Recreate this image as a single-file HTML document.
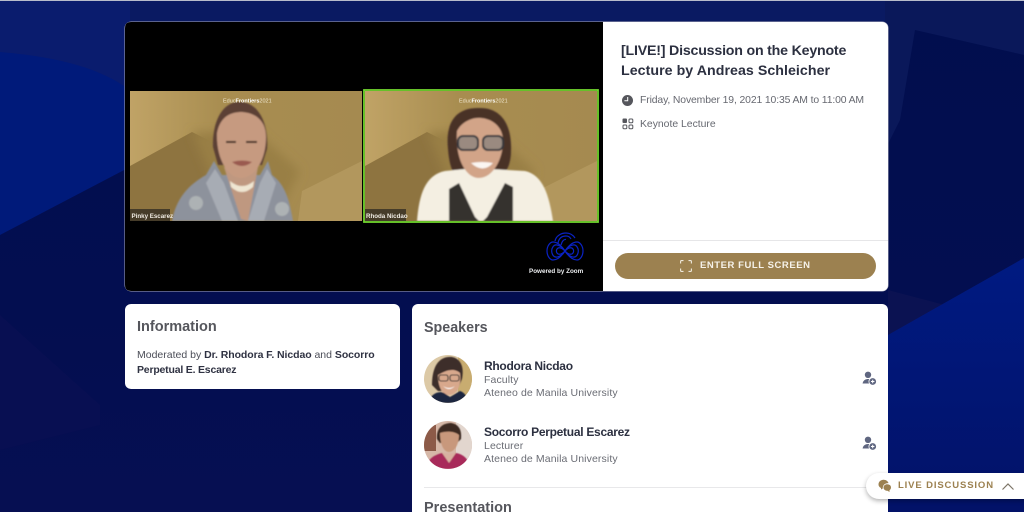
<!DOCTYPE html>
<html><head><meta charset="utf-8"><style>
html,body{margin:0;padding:0;width:1024px;height:512px;overflow:hidden}
body{position:relative;background:#020c4c;font-family:"Liberation Sans",sans-serif}
#w{position:absolute;left:0;top:0;width:1024px;height:512px;overflow:hidden}
.a{position:absolute;white-space:nowrap}
.card{position:absolute;background:#fff;border-radius:6px}
.b{font-weight:bold}
</style></head><body><div id="w">
<svg class="a" style="left:0;top:0" width="1024" height="512" viewBox="0 0 1024 512">
<defs>
<linearGradient id="br" x1="0" y1="0" x2="0" y2="1"><stop offset="0" stop-color="#001a82"/><stop offset="1" stop-color="#021268"/></linearGradient>
<linearGradient id="dk" x1="0" y1="0" x2="0" y2="1"><stop offset="0" stop-color="#010e4e"/><stop offset=".6" stop-color="#030e50"/><stop offset="1" stop-color="#060f52"/></linearGradient>
</defs>
<rect width="1024" height="512" fill="url(#dk)"/>
<rect y="0" width="1024" height="22" fill="#0a1a62"/>
<path d="M0 0H130V167L0 235Z" fill="#001a7a"/>
<path d="M0 0H130V90C105 72 70 58 0 52Z" fill="#0a1c6e"/>
<path d="M0 315L100 405V425L0 450Z" fill="#080f52"/>
<path d="M885 0H1024V55L915 30L900 120L885 150Z" fill="#0a185a"/>
<path d="M888 290L945 305L888 335Z" fill="#0b1252"/>
<path d="M888 335L1024 258V512H888Z" fill="url(#br)"/>
<rect width="1024" height="1" fill="#b8bccb"/>
</svg>

<div class="card" style="left:125px;top:22px;width:763px;height:269px;box-shadow:0 0 0 .5px #aab"></div>
<svg class="a" style="left:125px;top:22px" width="478" height="269" viewBox="125 22 478 269">
<defs>
<filter id="s1" x="-10%" y="-10%" width="120%" height="120%"><feGaussianBlur stdDeviation=".8"/></filter>
<filter id="s2"><feGaussianBlur stdDeviation="5"/></filter>
<clipPath id="c"><path d="M131 22H603V291H131Q125 291 125 285V28Q125 22 131 22Z"/></clipPath>
<clipPath id="v1"><rect x="130" y="91" width="232" height="130"/></clipPath>
<clipPath id="v2"><rect x="365" y="91" width="232" height="130"/></clipPath>
<linearGradient id="gv" x1="0" y1="0" x2="1" y2="0"><stop offset="0" stop-color="#c0a366"/><stop offset=".4" stop-color="#a88d50"/><stop offset="1" stop-color="#a58a50"/></linearGradient>
<g id="bgv">
<rect width="232" height="130" fill="url(#gv)"/>
<path d="M0 75L62 41L100 60L110 130H0Z" fill="#8e7440"/>
<path d="M62 41L125 40L170 80L145 130H100Z" fill="#997f45" filter="url(#s2)"/>
<path d="M232 70V130H168L172 100Z" fill="#b2975d"/>
</g>
</defs>
<g clip-path="url(#c)">
<rect x="125" y="22" width="478" height="269" fill="#000"/>
<g clip-path="url(#v1)">
<g transform="translate(130 91)"><use href="#bgv"/>
<g filter="url(#s1)">
<path d="M83 56C82 32 92 10 110 11C128 11 139 32 137 58L132 74H88Z" fill="#5c4034"/>
<path d="M42 130C46 108 58 94 76 84L84 70L92 84H130L138 70L142 84C156 94 160 112 163 130Z" fill="#8d929c"/>
<path d="M94 76L111 128L118 130L128 76Z" fill="#bf9880"/>
<path d="M85 78L94 92L108 130H92L76 92Z" fill="#a7acb4"/><path d="M137 78L130 92L118 130H134L146 92Z" fill="#a7acb4"/>
<path d="M87 42C90 26 100 21 112 21C126 22 136 30 136 46C136 70 124 87 111 87C98 87 86 68 87 42Z" fill="#c69a80"/>
<path d="M100 90Q112 100 124 90L123 96Q112 106 101 96Z" fill="#efe6d2"/>
<path d="M96 51L106 51M116 51L127 51" stroke="#3c2a22" stroke-width="2"/>
<path d="M102 71Q112 68 122 71Q112 79 102 71Z" fill="#9a5a50"/>
<circle cx="66" cy="112" r="7" fill="#c8ccc8" opacity=".55"/><circle cx="152" cy="118" r="7" fill="#c8ccc8" opacity=".55"/>
</g>
<rect x="0" y="118" width="40" height="12" fill="#3a3226" opacity=".85"/>
</g></g>
<g clip-path="url(#v2)">
<g transform="translate(365 91)"><use href="#bgv"/>
<g filter="url(#s1)">
<path d="M83 58C80 30 92 16 115 17C138 17 147 36 146 60C146 72 142 82 135 86H92C87 82 84 72 83 58Z" fill="#4a3026"/>
<path d="M52 130C54 104 60 84 80 80L100 78H126L160 80C178 84 184 104 188 130Z" fill="#f4efe2"/>
<path d="M84 98L94 92L110 126L114 130H84Z" fill="#35312f"/>
<path d="M148 96L140 92L122 126L118 130H148Z" fill="#35312f"/>
<path d="M92 40C96 32 106 26 116 27C128 28 138 36 138 50C138 68 128 87 114 87C100 87 90 66 92 40Z" fill="#d2a488"/>
<rect x="93" y="45" width="20" height="14" rx="5" fill="#9a8a80" stroke="#35383c" stroke-width="2"/>
<rect x="118" y="45" width="20" height="14" rx="5" fill="#9a8a80" stroke="#35383c" stroke-width="2"/>
<path d="M106 72Q117 70 128 72Q118 83 106 72Z" fill="#fbf6f2"/>
</g>
<rect x="0" y="118" width="41" height="12" fill="#3a3226" opacity=".85"/>
</g></g>
<rect x="364" y="90" width="234" height="132" fill="none" stroke="#72d62e" stroke-width="1.8"/>
<g fill="none" stroke="#0a22c4" stroke-width="1.2">
<g transform="translate(565 251)">
<path vector-effect="non-scaling-stroke" d="M0 0C-4-6-8-9-12-9C-15-9-18-5-18 0C-18 5-15 9-12 9C-8 9-4 6 0 0C4-6 8-9 12-9C15-9 18-5 18 0C18 5 15 9 12 9C8 9 4 6 0 0Z"/>
<path vector-effect="non-scaling-stroke" transform="scale(.74 .68)" d="M0 0C-4-6-8-9-12-9C-15-9-18-5-18 0C-18 5-15 9-12 9C-8 9-4 6 0 0C4-6 8-9 12-9C15-9 18-5 18 0C18 5 15 9 12 9C8 9 4 6 0 0Z"/>
<path vector-effect="non-scaling-stroke" transform="scale(.48 .36)" d="M0 0C-4-6-8-9-12-9C-15-9-18-5-18 0C-18 5-15 9-12 9C-8 9-4 6 0 0C4-6 8-9 12-9C15-9 18-5 18 0C18 5 15 9 12 9C8 9 4 6 0 0Z"/>
</g>
<path d="M555 241C556 236 561 233 566 233C570 233 573 235 575 238"/>
<path d="M558 243C559 238 562 236 566 236C568 236 570 237 571 239"/>
<path d="M561 245C562 241 564 239 566 239.5"/>
</g>
</g>
<text x="223" y="102.5" fill="#efe6cd" font-size="5.5" font-family="Liberation Sans">Educ<tspan font-weight="bold" fill="#fff">Frontiers</tspan>2021</text>
<text x="459" y="102.5" fill="#efe6cd" font-size="5.5" font-family="Liberation Sans">Educ<tspan font-weight="bold" fill="#fff">Frontiers</tspan>2021</text>
<text x="131.5" y="218" fill="#f0ece4" font-size="6.2" font-weight="bold" font-family="Liberation Sans">Pinky Escarez</text>
<text x="366" y="218" fill="#f0ece4" font-size="6.2" font-weight="bold" font-family="Liberation Sans">Rhoda Nicdao</text>
<text x="529" y="273" fill="#eceef0" font-size="6.3" font-weight="bold" font-family="Liberation Sans">Powered by Zoom</text>
</svg>

<div class="a b" style="left:621px;top:41px;font-size:14.2px;line-height:20px;color:#2c3040"><span style="letter-spacing:-.2px">[LIVE!] Discussion on the Keynote</span><br><span style="letter-spacing:.05px">Lecture by Andreas Schleicher</span></div>
<svg class="a" style="left:621px;top:94px" width="14" height="14" viewBox="0 0 14 14"><circle cx="6.5" cy="6.5" r="5.5" fill="#55565c"/><path d="M6.7 3V6.8H3.4" stroke="#fff" stroke-width="1" fill="none"/></svg>
<div class="a" style="left:640px;top:94px;font-size:10.4px;line-height:14px;color:#666870;letter-spacing:-.12px">Friday, November 19, 2021 10:35 AM to 11:00 AM</div>
<svg class="a" style="left:622px;top:118px" width="12" height="12" viewBox="0 0 12 12"><rect x=".5" y=".5" width="4.5" height="4.5" rx="1" fill="#55565c"/><g fill="none" stroke="#55565c"><rect x="7" y="1" width="3.8" height="3.8" rx="1"/><rect x="1" y="7" width="3.8" height="3.8" rx="1"/><rect x="7" y="7" width="3.8" height="3.8" rx="1"/></g></svg>
<div class="a" style="left:640px;top:118px;font-size:10.4px;line-height:14px;color:#666870">Keynote Lecture</div>
<div class="a" style="left:603px;top:240px;width:285px;height:1px;background:#e6e6e8"></div>
<div class="a" style="left:615px;top:253px;width:261px;height:26px;border-radius:13px;background:#9c8150"></div>
<svg class="a" style="left:680px;top:260px" width="12" height="12" viewBox="0 0 12 12" fill="none" stroke="#efe9dc" stroke-width="1.1"><path d="M.6 3.5V1.5Q.6.6 1.5.6H3.5M8.5.6H10.5Q11.4.6 11.4 1.5V3.5M.6 8.5V10.5Q.6 11.4 1.5 11.4H3.5M8.5 11.4H10.5Q11.4 11.4 11.4 10.5V8.5"/></svg>
<div class="a b" style="left:700px;top:259px;font-size:9.5px;line-height:14px;color:#f6f2ea;letter-spacing:.55px">ENTER FULL SCREEN</div>

<div class="card" style="left:125px;top:304px;width:275px;height:85px"></div>
<div class="a b" style="left:137px;top:318px;font-size:14.5px;line-height:18px;color:#55565c">Information</div>
<div class="a" style="left:137px;top:348px;font-size:10.5px;line-height:15px;color:#4c4e58">Moderated by <span class="b" style="color:#2f3242;letter-spacing:-.08px">Dr. Rhodora F. Nicdao</span> and <span class="b" style="color:#2f3242;letter-spacing:-.08px">Socorro</span><br><span class="b" style="color:#2f3242;letter-spacing:-.2px">Perpetual E. Escarez</span></div>

<div class="card" style="left:412px;top:304px;width:476px;height:208px;border-radius:6px 6px 0 0"></div>
<div class="a b" style="left:424px;top:319px;font-size:14.3px;line-height:18px;color:#55565c">Speakers</div>
<svg class="a" style="left:424px;top:355px" width="48" height="114" viewBox="0 0 48 114">
<defs><clipPath id="a1"><circle cx="24" cy="24" r="24"/></clipPath><clipPath id="a2"><circle cx="24" cy="90" r="24"/></clipPath><filter id="s3"><feGaussianBlur stdDeviation=".5"/></filter></defs>
<g clip-path="url(#a1)"><rect width="48" height="48" fill="#dcc9a6"/><rect x="34" width="14" height="48" fill="#c8ac70"/>
<g filter="url(#s3)"><path d="M8 30C8 10 16 1 28 2C38 4 40 14 38 24L33 36H14Z" fill="#3e2f2c"/><path d="M14 20C20 16 30 12 36 18C38 32 32 40 25 40C18 40 14 32 14 20Z" fill="#d8a88c"/><path d="M4 48C6 40 14 35 20 38L26 42L36 36C42 38 44 44 44 48Z" fill="#1c2540"/>
<rect x="15" y="20" width="9" height="6" rx="2" fill="none" stroke="#333" stroke-width="1.1"/><rect x="26" y="20" width="9" height="6" rx="2" fill="none" stroke="#333" stroke-width="1.1"/><path d="M19 31Q25 35 31 31Q25 37 19 31Z" fill="#fff"/></g></g>
<g clip-path="url(#a2)"><rect y="66" width="48" height="48" fill="#d6b8a8"/><rect x="32" y="66" width="16" height="48" fill="#e2d6ce"/><rect y="70" width="12" height="26" fill="#8c5a48"/>
<g filter="url(#s3)"><path d="M13 84C12 72 20 68 27 68C34 69 38 74 37 84L33 88H16Z" fill="#3c2a20"/><path d="M16 78C22 76 30 76 35 80C35 90 30 97 25 97C20 97 16 90 16 78Z" fill="#c8987c"/><path d="M2 114C3 104 10 100 18 98L32 98C42 100 45 106 46 114Z" fill="#a82c5a"/><path d="M18 98L25 108L32 98Z" fill="#d8b0a0"/></g></g>
</svg>
<div class="a b" style="left:484px;top:359px;font-size:12px;line-height:15px;color:#2c3040;letter-spacing:-.28px">Rhodora Nicdao</div>
<div class="a" style="left:484px;top:373px;font-size:10.5px;line-height:14px;color:#6a6c74;letter-spacing:.1px">Faculty</div>
<div class="a" style="left:484px;top:386px;font-size:10.5px;line-height:14px;color:#6a6c74;letter-spacing:.11px">Ateneo de Manila University</div>
<div class="a b" style="left:484px;top:425px;font-size:12px;line-height:15px;color:#2c3040;letter-spacing:-.28px">Socorro Perpetual Escarez</div>
<div class="a" style="left:484px;top:439px;font-size:10.5px;line-height:14px;color:#6a6c74;letter-spacing:.1px">Lecturer</div>
<div class="a" style="left:484px;top:452px;font-size:10.5px;line-height:14px;color:#6a6c74;letter-spacing:.11px">Ateneo de Manila University</div>
<svg class="a" style="left:862px;top:371px" width="15" height="15" viewBox="0 0 15 15"><circle cx="6" cy="3.8" r="3.2" fill="#5f6680"/><path d="M.6 12.5C1 9.5 3.5 8 6 8C7 8 8 8.2 8.6 8.6L7.5 12.5Z" fill="#5f6680"/><circle cx="10.7" cy="10.5" r="3.8" fill="#5f6680" stroke="#fff" stroke-width=".8"/><path d="M10.7 8.8V12.2M9 10.5H12.4" stroke="#fff" stroke-width="1"/></svg>
<svg class="a" style="left:862px;top:436px" width="15" height="15" viewBox="0 0 15 15"><circle cx="6" cy="3.8" r="3.2" fill="#5f6680"/><path d="M.6 12.5C1 9.5 3.5 8 6 8C7 8 8 8.2 8.6 8.6L7.5 12.5Z" fill="#5f6680"/><circle cx="10.7" cy="10.5" r="3.8" fill="#5f6680" stroke="#fff" stroke-width=".8"/><path d="M10.7 8.8V12.2M9 10.5H12.4" stroke="#fff" stroke-width="1"/></svg>
<div class="a" style="left:424px;top:487px;width:452px;height:1px;background:#e8e8ea"></div>
<div class="a b" style="left:424px;top:499px;font-size:14.5px;line-height:18px;color:#55565c">Presentation</div>

<div class="a" style="left:866px;top:473px;width:170px;height:26px;border-radius:13px;background:#fff;box-shadow:0 2px 5px rgba(0,0,0,.3)"></div>
<svg class="a" style="left:878px;top:479px" width="14" height="14" viewBox="0 0 14 14"><path d="M.5 5.5C.5 2.5 3 .8 5.5.8C8 .8 10 2.2 10.5 4.2C7.5 4 4.5 6 4.8 9.5L3 10.5L3 9C1.4 8.2.5 7 .5 5.5Z" fill="#9c8150"/><path d="M5.5 8.5C5.5 6.5 7.3 5.2 9.2 5.2C11.3 5.2 13 6.5 13 8.5C13 9.7 12.3 10.6 11.5 11.2V13L9.5 11.8C7.3 11.8 5.5 10.5 5.5 8.5Z" fill="#9c8150"/></svg>
<div class="a b" style="left:898px;top:479px;font-size:9.5px;line-height:14px;color:#9c8150;letter-spacing:.87px">LIVE DISCUSSION</div>
<svg class="a" style="left:1001px;top:482px" width="14" height="9" viewBox="0 0 14 9"><path d="M1.5 7.5L7 2L12.5 7.5" fill="none" stroke="#7c7466" stroke-width="1.2"/></svg>
</div></body></html>
